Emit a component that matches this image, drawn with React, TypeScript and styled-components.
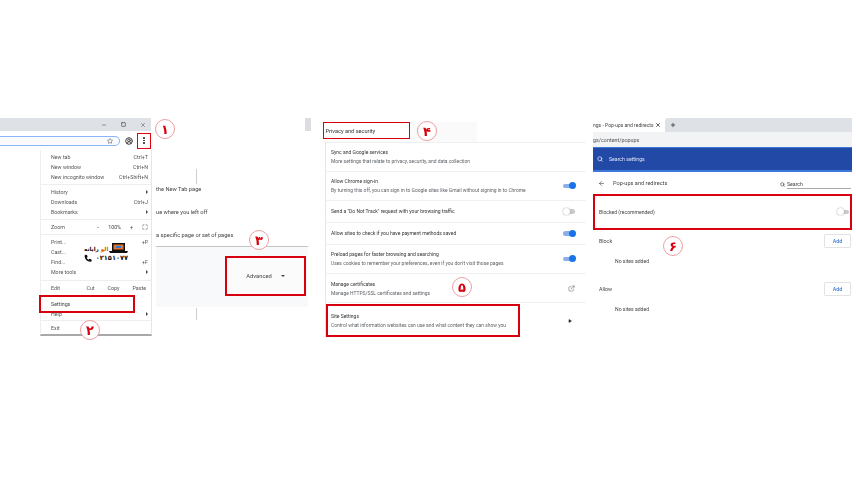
import React from 'react';
import styled, { createGlobalStyle } from 'styled-components';
import { Search, ArrowLeft, Star, UserCircle2, ExternalLink, X, Plus, Minus, Maximize, Square, Play } from 'lucide-react';

const Global = createGlobalStyle`
  html, body { margin: 0; padding: 0; background: #fff; }
  body { width: 856px; height: 482px; overflow: hidden; font-family: Roboto, "Liberation Sans", sans-serif; color: #3c4043; }
`;

/* the shots in the picture are soft, a compressed photo of the browser */
const Page = styled.div`
  position: relative;
  width: 856px;
  height: 482px;
  padding-top: 118px;
  box-sizing: border-box;
  display: flex;
  align-items: flex-start;
  font-size: 5.3px;
  overflow: hidden;
  filter: blur(0.3px);
`;

/* ---- first shot ---- */
const ChromeShot = styled.div`
  width: 153px;
  flex: none;
`;

const TitleBar = styled.div`
  width: 151px;
  height: 13px;
  background: #dee1e6;
  display: flex;
  align-items: center;
  justify-content: flex-end;
  gap: 14px;
  padding-right: 5px;
  box-sizing: border-box;
  color: #444;
`;

const Toolbar = styled.div`
  height: 19px;
  display: flex;
  align-items: center;
`;

const UrlField = styled.div`
  width: 120px;
  height: 10px;
  background: #f8fafd;
  border: 1px solid #8ab4f8;
  border-left: 0;
  border-radius: 0 6px 6px 0;
  display: flex;
  align-items: center;
  justify-content: flex-end;
  padding-right: 6px;
  box-sizing: border-box;
  color: #444;
`;

const ToolIcon = styled.div`
  width: 10px;
  margin-left: 4px;
  display: flex;
  justify-content: center;
  color: #444;
`;

const MenuDots = styled.div`
  margin-left: 3px;
  width: 14px;
  height: 16px;
  border: 1.5px solid #e3000f;
  box-sizing: border-box;
  display: flex;
  flex-direction: column;
  align-items: center;
  justify-content: center;
  gap: 1px;

  i {
    width: 1.5px;
    height: 1.5px;
    border-radius: 50%;
    background: #333;
  }
`;

const Menu = styled.div`
  margin-left: 40px;
  width: 112px;
  height: 186px;
  padding-top: 2px;
  box-sizing: border-box;
  background: #fff;
  border-right: 1px solid #e6e6e6;
  border-bottom: 2px solid #a8a8a8;
  border-left: 1px solid #eee;
`;

const MenuRow = styled.div`
  height: 10.05px;
  display: flex;
  align-items: center;
  justify-content: space-between;
  padding: 0 3px 0 10px;
  color: #555;
  white-space: nowrap;
`;

const HelpRow = styled(MenuRow)`
  height: 8px;
  margin-top: -3px;
  position: relative;
`;

const MenuRule = styled.div`
  height: 1px;
  margin: 2px 0;
  background: #eeeeee;
`;

const Tri = styled.span`
  width: 0;
  height: 0;
  border-left: 2.5px solid #444;
  border-top: 2px solid transparent;
  border-bottom: 2px solid transparent;
`;

const EditGroup = styled.div`
  display: flex;
  gap: 13px;
  margin-right: 2px;
`;

const ZoomGroup = styled.div`
  display: flex;
  align-items: center;
  gap: 9px;
  color: #444;
`;

const SettingsBox = styled.div`
  height: 18px;
  width: 96px;
  margin: 2px 0 0 -2px;
  padding-left: 10px;
  display: flex;
  align-items: center;
  box-sizing: border-box;
  border: 2px solid #d8000f;
  color: #444;
  position: relative;
`;

const StartupPane = styled.div`
  width: 169px;
  flex: none;
  height: 204px;
  position: relative;
  padding: 59px 0 0 3px;
  box-sizing: border-box;
`;

const ScrollThumb = styled.div`
  position: absolute;
  top: 0;
  right: 11px;
  width: 6px;
  height: 13px;
  background: #dcdde0;
`;

const Hairline = styled.div<{ $top: number; $h: number }>`
  position: absolute;
  left: 43px;
  top: ${p => p.$top}px;
  width: 1px;
  height: ${p => p.$h}px;
  background: #cfcfcf;
`;

const StartupOption = styled.div`
  height: 23px;
  display: flex;
  align-items: center;
  color: #444;
  font-size: 5.7px;
  white-space: nowrap;
`;

const AdvancedStrip = styled.div`
  width: 152px;
  height: 61px;
  border-top: 1px solid #c4c4c4;
  background: #f8f9fb;
  display: flex;
  justify-content: flex-end;
  padding: 9px 2px 0 0;
  box-sizing: border-box;
`;

const AdvancedBox = styled.div`
  width: 81px;
  height: 40px;
  border: 2px solid #d8000f;
  box-sizing: border-box;
  background: #fbfbfc;
  display: flex;
  align-items: center;
  justify-content: center;
  gap: 9px;
  color: #444;
  font-size: 5.8px;
`;

const DownCaret = styled.span`
  width: 0;
  height: 0;
  border-top: 2px solid #444;
  border-left: 2px solid transparent;
  border-right: 2px solid transparent;
`;

/* ---- second shot ---- */
const PrivacyShot = styled.div`
  width: 264px;
  flex: none;
  margin-top: 4px;
`;

const HeadingStrip = styled.div`
  width: 154px;
  height: 20px;
  margin-left: 1px;
  background: #fafafa;
`;

const HeadingBox = styled.div`
  width: 87px;
  height: 17px;
  border: 1.5px solid #d8000f;
  box-sizing: border-box;
  display: flex;
  align-items: center;
  padding-left: 1.5px;
  color: #333;
  font-size: 5.6px;
  background: #fff;
`;

const RowList = styled.div`
  margin-left: 3px;
  border-left: 1px solid #e4e4e4;
`;

const SettingRow = styled.div<{ $h: number }>`
  height: ${p => p.$h}px;
  box-sizing: border-box;
  display: flex;
  align-items: center;
  justify-content: space-between;
  padding: 0 11px 0 5px;
  border-top: 1px solid #f0f0f0;
`;

const SiteRow = styled.div`
  display: flex;
  align-items: center;
  justify-content: space-between;
  padding: 1px 14px 0 0;
  border-top: 1px solid #f0f0f0;
  margin-top: -1px;
`;

const RedRow = styled.div`
  height: 33px;
  width: 194px;
  box-sizing: border-box;
  display: flex;
  align-items: center;
  border: 2px solid #d8000f;
  padding-left: 3px;
`;

const RowText = styled.div`
  display: flex;
  flex-direction: column;
  gap: 2.6px;
  white-space: nowrap;
`;

const RowTitle = styled.div`
  color: #333;
  font-size: 5px;
  line-height: 6.5px;
`;

const RowSub = styled.div`
  color: #5f6368;
  font-size: 4.95px;
  line-height: 6.5px;
`;

const Toggle = styled.div<{ $on?: boolean }>`
  position: relative;
  width: 12px;
  height: 4.5px;
  border-radius: 3px;
  background: ${p => (p.$on ? '#8ab0ea' : '#c9c9c9')};
  flex: none;

  &::after {
    content: '';
    position: absolute;
    top: -1.5px;
    left: ${p => (p.$on ? '6px' : '0')};
    width: 7px;
    height: 7px;
    border-radius: 50%;
    background: ${p => (p.$on ? '#1a73e8' : '#fff')};
    box-shadow: ${p => (p.$on ? 'none' : '0 0 1.5px #888')};
  }
`;

/* ---- third shot ---- */
const PopupShot = styled.div`
  width: 259px;
  flex: none;
  margin-left: 7px;
`;

const TabLine = styled.div`
  height: 14px;
  display: flex;
  align-items: center;
  color: #444;
  font-size: 5px;
  white-space: nowrap;
`;

const TabLabel = styled.div`
  width: 60px;
`;

const TabClose = styled.div`
  width: 10px;
  margin-right: 2px;
  display: flex;
  justify-content: center;
  color: #333;
`;

const TabRest = styled.div`
  flex: 1;
  height: 14px;
  background: #dee1e6;
  border-radius: 3px 0 0 0;
  display: flex;
  align-items: center;
  padding-left: 5px;
  color: #333;
`;

const AddressLine = styled.div`
  height: 15px;
  background: #f1f3f4;
  display: flex;
  align-items: center;
  color: #555;
  font-size: 5.4px;
`;

const BlueBar = styled.div`
  height: 25px;
  background: #2349a6;
  border-top: 1px solid #3f78dc;
  border-bottom: 2px solid #3f78dc;
  box-sizing: border-box;
  display: flex;
  align-items: center;
  gap: 6px;
  padding-left: 4px;
  color: #dfe6f7;
  font-size: 5.2px;
`;

const SubHeader = styled.div`
  height: 22px;
  display: flex;
  align-items: center;
  padding: 0 1px 0 5px;
  color: #444;
`;

const SubTitle = styled.div`
  margin-left: 8px;
  font-size: 5.6px;
  color: #444;
  flex: 1;
`;

const SearchField = styled.div`
  width: 71px;
  height: 10px;
  display: flex;
  align-items: center;
  gap: 2px;
  font-size: 5.2px;
  color: #444;
  position: relative;
  top: 1px;

  span {
    flex: 1;
    border-bottom: 1.5px solid #aaa;
    line-height: 8px;
  }
`;

const BlockedBox = styled.div`
  height: 36px;
  border: 2px solid #d8000f;
  box-sizing: border-box;
  display: flex;
  align-items: center;
  justify-content: space-between;
  padding: 0 1px 0 4px;
  color: #444;
  font-size: 5.1px;
`;

const ListHead = styled.div<{ $gap?: number }>`
  height: 14px;
  margin-top: ${p => p.$gap ?? 0}px;
  display: flex;
  align-items: center;
  justify-content: space-between;
  padding: 0 1px 0 6px;
  color: #444;
`;

const AddButton = styled.div`
  width: 27px;
  height: 14px;
  box-sizing: border-box;
  border: 1px solid #e3e3e3;
  border-radius: 1px;
  display: flex;
  align-items: center;
  justify-content: center;
  color: #3b78d8;
  font-weight: 500;
`;

const SitesNote = styled.div`
  height: 34px;
  padding: 10px 0 0 22px;
  box-sizing: border-box;
  color: #444;
  font-size: 5.1px;
`;

/* ---- overlays ---- */
const Callout = styled.div<{ $x: number; $y: number }>`
  position: absolute;
  left: ${p => p.$x - 10}px;
  top: ${p => p.$y - 10}px;
  width: 20px;
  height: 20px;
  box-sizing: border-box;
  border: 1px solid #eb9ea2;
  border-radius: 50%;
  background: #fff;
  display: flex;
  align-items: center;
  justify-content: center;
  color: #d8000f;
  font: bold 13px "DejaVu Sans", sans-serif;
  line-height: 1;
`;

const Watermark = styled.div`
  position: absolute;
  left: 84px;
  top: 242px;
  width: 44px;
  height: 21px;
  background: #fff;
  color: #111;
  font-family: "DejaVu Sans", "Noto Sans", sans-serif;
  font-weight: bold;
  white-space: nowrap;
`;

const WatermarkTop = styled.div`
  display: flex;
  align-items: flex-end;
  justify-content: space-between;
  height: 11px;
  font-size: 5.6px;
  line-height: 7px;
`;

const WatermarkOrange = styled.span`
  color: #d8560f;
`;

const WatermarkPhone = styled.div`
  display: flex;
  align-items: center;
  justify-content: space-between;
  height: 10px;
  font-size: 6.6px;
  line-height: 10px;

  svg {
    flex: none;
  }
`;

const LaptopLogo = () => (
  <svg width="19" height="10" viewBox="0 0 19 10">
    <rect x="3" y="0" width="13" height="8" fill="#111" />
    <rect x="4.5" y="1.5" width="10" height="5" fill="#e8722a" />
    <rect x="7" y="3" width="5" height="2" fill="#2f7fd0" />
    <path d="M0 8h19l-1 2H1z" fill="#111" />
  </svg>
);

const PhoneLogo = () => (
  <svg width="8" height="8" viewBox="0 0 24 24" fill="#111">
    <path d="M5 2l4 1 2 6-3 2c1 3 3 5 6 6l2-3 6 2 1 4c0 2-2 3-4 3C10 23 1 14 2 5c0-2 1-3 3-3z" />
  </svg>
);

const settingRows = [
  { h: 29, title: 'Sync and Google services', sub: 'More settings that relate to privacy, security, and data collection' },
  { h: 29, title: 'Allow Chrome sign-in', sub: 'By turning this off, you can sign in to Google sites like Gmail without signing in to Chrome', on: true },
  { h: 22, title: 'Send a "Do Not Track" request with your browsing traffic', off: true },
  { h: 22, title: 'Allow sites to check if you have payment methods saved', on: true },
  { h: 29, title: 'Preload pages for faster browsing and searching', sub: "Uses cookies to remember your preferences, even if you don't visit those pages", on: true },
];

export default function App(): JSX.Element {
  return (
    <Page>
      <Global />

      <ChromeShot>
        <TitleBar>
          <Minus size={6} />
          <Square size={5} strokeWidth={3} />
          <X size={6} />
        </TitleBar>
        <Toolbar>
          <UrlField>
            <Star size={6} />
          </UrlField>
          <ToolIcon>
            <UserCircle2 size={8} strokeWidth={3} />
          </ToolIcon>
          <MenuDots>
            <i />
            <i />
            <i />
          </MenuDots>
        </Toolbar>
        <Menu>
          <MenuRow>New tab<span>Ctrl+T</span></MenuRow>
          <MenuRow>New window<span>Ctrl+N</span></MenuRow>
          <MenuRow>New incognito window<span>Ctrl+Shift+N</span></MenuRow>
          <MenuRule />
          <MenuRow>History<Tri /></MenuRow>
          <MenuRow>Downloads<span>Ctrl+J</span></MenuRow>
          <MenuRow>Bookmarks<Tri /></MenuRow>
          <MenuRule />
          <MenuRow>
            Zoom
            <ZoomGroup>
              <span>−</span>
              <span>100%</span>
              <span>+</span>
              <Maximize size={6} />
            </ZoomGroup>
          </MenuRow>
          <MenuRule />
          <MenuRow>Print...<span>+P</span></MenuRow>
          <MenuRow>Cast...</MenuRow>
          <MenuRow>Find...<span>+F</span></MenuRow>
          <MenuRow>More tools<Tri /></MenuRow>
          <MenuRule />
          <MenuRow>
            Edit
            <EditGroup>
              <span>Cut</span>
              <span>Copy</span>
              <span>Paste</span>
            </EditGroup>
          </MenuRow>
          <SettingsBox>Settings</SettingsBox>
          <HelpRow>Help<Tri /></HelpRow>
          <MenuRule />
          <MenuRow>Exit</MenuRow>
        </Menu>
      </ChromeShot>

      <StartupPane>
        <ScrollThumb />
        <Hairline $top={51} $h={15} />
        <Hairline $top={190} $h={12} />
        <StartupOption>the New Tab page</StartupOption>
        <StartupOption>ue where you left off</StartupOption>
        <StartupOption>a specific page or set of pages</StartupOption>
        <AdvancedStrip>
          <AdvancedBox>
            Advanced
            <DownCaret />
          </AdvancedBox>
        </AdvancedStrip>
      </StartupPane>

      <PrivacyShot>
        <HeadingStrip>
          <HeadingBox>Privacy and security</HeadingBox>
        </HeadingStrip>
        <RowList>
          {settingRows.map(row => (
            <SettingRow key={row.title} $h={row.h}>
              <RowText>
                <RowTitle>{row.title}</RowTitle>
                {row.sub && <RowSub>{row.sub}</RowSub>}
              </RowText>
              {row.on && <Toggle $on />}
              {row.off && <Toggle />}
            </SettingRow>
          ))}
          <SettingRow $h={30}>
            <RowText>
              <RowTitle>Manage certificates</RowTitle>
              <RowSub>Manage HTTPS/SSL certificates and settings</RowSub>
            </RowText>
            <ExternalLink size={7} color="#777" />
          </SettingRow>
          <SiteRow>
            <RedRow>
              <RowText>
                <RowTitle>Site Settings</RowTitle>
                <RowSub>Control what information websites can use and what content they can show you</RowSub>
              </RowText>
            </RedRow>
            <Play size={4} fill="#333" color="#333" />
          </SiteRow>
        </RowList>
      </PrivacyShot>

      <PopupShot>
        <TabLine>
          <TabLabel>ngs - Pop-ups and redirects</TabLabel>
          <TabClose><X size={6} strokeWidth={3} /></TabClose>
          <TabRest><Plus size={6} strokeWidth={3} /></TabRest>
        </TabLine>
        <AddressLine>gs/content/popups</AddressLine>
        <BlueBar>
          <Search size={6} strokeWidth={3} />
          Search settings
        </BlueBar>
        <SubHeader>
          <ArrowLeft size={7} />
          <SubTitle>Pop-ups and redirects</SubTitle>
          <SearchField>
            <Search size={5} strokeWidth={3} />
            <span>Search</span>
          </SearchField>
        </SubHeader>
        <BlockedBox>
          Blocked (recommended)
          <Toggle />
        </BlockedBox>
        <ListHead $gap={4}>
          Block
          <AddButton>Add</AddButton>
        </ListHead>
        <SitesNote>No sites added</SitesNote>
        <ListHead>
          Allow
          <AddButton>Add</AddButton>
        </ListHead>
        <SitesNote>No sites added</SitesNote>
      </PopupShot>

      <Watermark>
        <WatermarkTop>
          <span dir="rtl"><WatermarkOrange>الو</WatermarkOrange> رایانه</span>
          <LaptopLogo />
        </WatermarkTop>
        <WatermarkPhone>
          <PhoneLogo />
          <span>۰۲۱۵۱۰۷۷</span>
        </WatermarkPhone>
      </Watermark>

      <Callout $x={165} $y={129}>۱</Callout>
      <Callout $x={90} $y={330}>۲</Callout>
      <Callout $x={259} $y={240}>۳</Callout>
      <Callout $x={427} $y={131}>۴</Callout>
      <Callout $x={462} $y={287}>۵</Callout>
      <Callout $x={673} $y={246}>۶</Callout>
    </Page>
  );
}
